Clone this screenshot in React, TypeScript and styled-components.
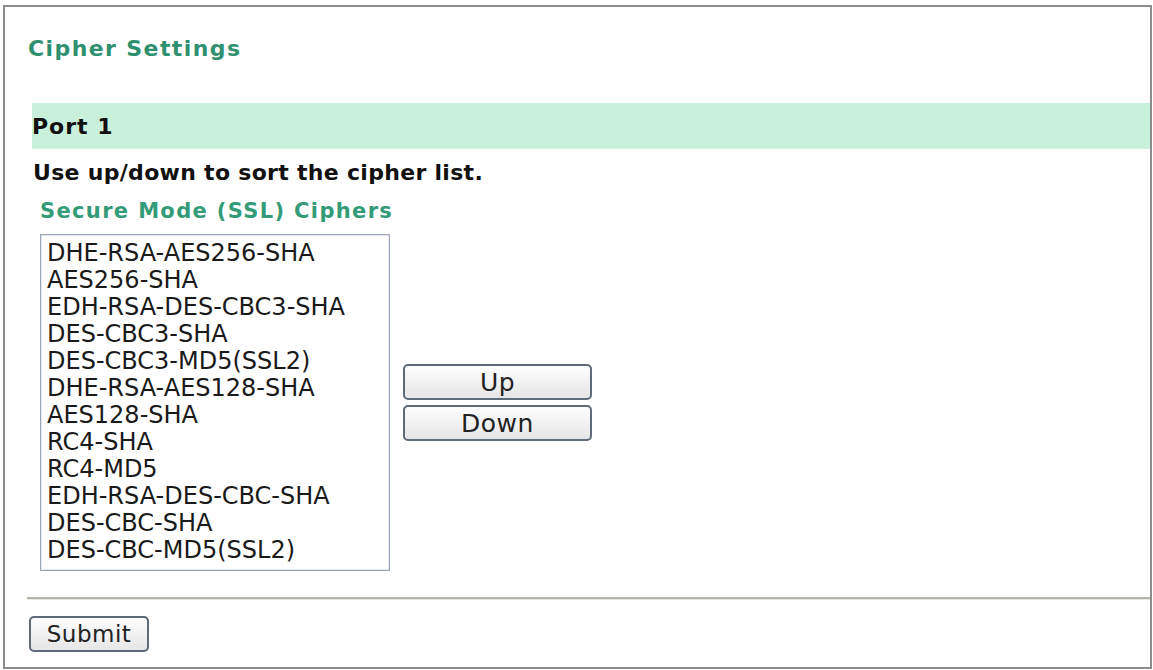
import React from 'react';
import styled, { createGlobalStyle } from 'styled-components';

const GlobalStyle = createGlobalStyle`
  html, body {
    margin: 0;
    padding: 0;
    background: #ffffff;
    font-family: "DejaVu Sans", Verdana, sans-serif;
  }
`;

const ciphers = [
  'DHE-RSA-AES256-SHA',
  'AES256-SHA',
  'EDH-RSA-DES-CBC3-SHA',
  'DES-CBC3-SHA',
  'DES-CBC3-MD5(SSL2)',
  'DHE-RSA-AES128-SHA',
  'AES128-SHA',
  'RC4-SHA',
  'RC4-MD5',
  'EDH-RSA-DES-CBC-SHA',
  'DES-CBC-SHA',
  'DES-CBC-MD5(SSL2)',
];

const Frame = styled.div`
  box-sizing: border-box;
  margin: 5px 0 0 3px;
  width: 1149px;
  height: 664px;
  border: 2px solid #8c8c8c;
  background: #fff;
  overflow: hidden;
`;

const Title = styled.h1`
  margin: 31px 0 0 23px;
  font-size: 22px;
  line-height: 22px;
  font-weight: bold;
  letter-spacing: 1.4px;
  color: #2f9070;
`;

const PortBar = styled.div`
  display: flex;
  align-items: center;
  margin: 43px 0 0 27px;
  height: 46px;
  background: #c9f0da;
  font-size: 22px;
  font-weight: bold;
  letter-spacing: 1px;
  color: #111;
`;

const Hint = styled.p`
  margin: 13px 0 0 28px;
  font-size: 22px;
  line-height: 22px;
  font-weight: bold;
  letter-spacing: 0.3px;
  color: #111;
`;

const SubTitle = styled.h2`
  margin: 17px 0 0 35px;
  font-size: 21px;
  line-height: 21px;
  font-weight: bold;
  letter-spacing: 1.35px;
  color: #339b78;
`;

const ListRow = styled.div`
  display: flex;
  align-items: center;
  gap: 13px;
  margin: 12px 0 0 35px;
`;

const CipherList = styled.div`
  box-sizing: border-box;
  width: 350px;
  height: 337px;
  padding: 5px 0 0 6px;
  border: 1px solid #9ba7b7;
  box-shadow: inset 0 0 0 1px #e3e8ee;
  background: #fff;
`;

const CipherItem = styled.div`
  font-size: 24px;
  line-height: 27px;
  color: #1a1a1a;
  white-space: nowrap;
`;

const ButtonStack = styled.div`
  display: flex;
  flex-direction: column;
  gap: 5px;
`;

const Button = styled.button<{ $width: number; $size: number }>`
  box-sizing: border-box;
  width: ${(p) => p.$width}px;
  height: 36px;
  padding: 0;
  border: 2px solid #5f6b78;
  border-radius: 5px;
  background: linear-gradient(#fdfdfd, #e6e6e6);
  font-family: "DejaVu Sans", Verdana, sans-serif;
  font-size: ${(p) => p.$size}px;
  letter-spacing: 0.5px;
  color: #222;
  cursor: pointer;
`;

const Divider = styled.hr`
  margin: 26px 0 0 22px;
  border: 0;
  height: 2px;
  background: #b4b5ad;
  box-shadow: 0 1px 0 #e8e8e2;
`;

const Footer = styled.div`
  margin: 17px 0 0 24px;
`;

export default function App() {
  return (
    <>
      <GlobalStyle />
      <Frame>
        <Title>Cipher Settings</Title>
        <PortBar>Port 1</PortBar>
        <Hint>Use up/down to sort the cipher list.</Hint>
        <SubTitle>Secure Mode (SSL) Ciphers</SubTitle>
        <ListRow>
          <CipherList role="listbox">
            {ciphers.map((c) => (
              <CipherItem key={c} role="option">{c}</CipherItem>
            ))}
          </CipherList>
          <ButtonStack>
            <Button $width={189} $size={25}>Up</Button>
            <Button $width={189} $size={25}>Down</Button>
          </ButtonStack>
        </ListRow>
        <Divider />
        <Footer>
          <Button $width={120} $size={23}>Submit</Button>
        </Footer>
      </Frame>
    </>
  );
}
